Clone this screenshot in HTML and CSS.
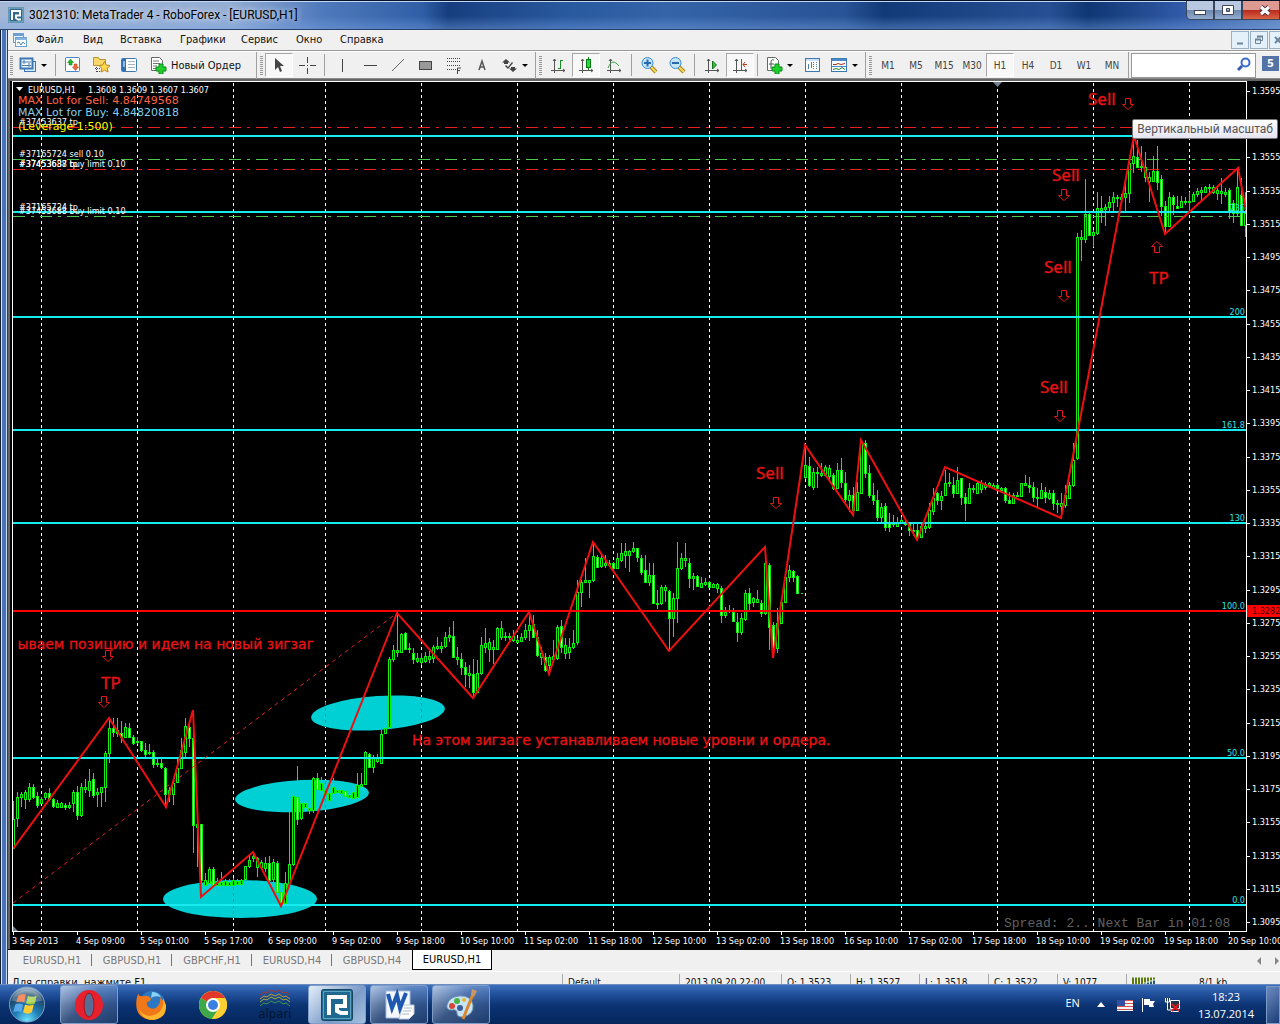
FILE: index.html
```html
<!DOCTYPE html>
<html lang="ru">
<head>
<meta charset="utf-8">
<meta name="viewport" content="width=device-width, initial-scale=1">
<title>3021310: MetaTrader 4 - RoboForex - [EURUSD,H1]</title>
<link rel="stylesheet" href="styles.css">
</head>
<body>
<div class="window">
  <header class="titlebar">
    <svg class="app-icon" viewBox="0 0 32 32"><rect width="32" height="32" rx="3" fill="#2c6a8e"/><path d="M2 2h28v28H2z" fill="none" stroke="#9cc6da" stroke-width="2"/><path d="M8 26V8h16v9h-8v5l4 3h6" fill="none" stroke="#fff" stroke-width="4"/></svg>
    <h1 class="title">3021310: MetaTrader 4 - RoboForex - [EURUSD,H1]</h1>
    <div class="window-controls">
      <button class="wc" aria-label="Свернуть"><svg viewBox="0 0 26 18"><rect x="7.500" y="9.500" width="11" height="4" fill="#fff" stroke="#445"/></svg></button>
      <button class="wc" aria-label="Развернуть"><svg viewBox="0 0 26 18"><path d="M7.500 4.500h11v9h-11zM11.500 7.500h3v3h-3z" fill="#fff" fill-rule="evenodd" stroke="#445"/></svg></button>
      <button class="wc wc-close" aria-label="Закрыть"><svg viewBox="0 0 36 18"><path d="M18 6l8 7M26 6l-8 7" stroke="#534" stroke-width="5"/><path d="M18 6l8 7M26 6l-8 7" stroke="#fff" stroke-width="3"/></svg></button>
    </div>
  </header>

  <div class="client">
    <nav class="menubar">
      <svg class="menu-icon" viewBox="0 0 16 16"><rect x="1.500" y="1.500" width="10" height="9" fill="#eaf4ff" stroke="#6c9fd4"/><path d="M1 3h11" stroke="#6c9fd4" stroke-width="2"/><rect x="3.500" y="5.500" width="11" height="9" fill="#fff" stroke="#6c9fd4"/><path d="M4 7h11" stroke="#8ab4e0" stroke-width="2"/><path d="M5 11l2-1 2 3 2-3 2 2" fill="none" stroke="#4a86c4"/></svg>
      <button class="menu-item m1">Файл</button>
      <button class="menu-item m2">Вид</button>
      <button class="menu-item m3">Вставка</button>
      <button class="menu-item m4">Графики</button>
      <button class="menu-item m5">Сервис</button>
      <button class="menu-item m6">Окно</button>
      <button class="menu-item m7">Справка</button>
      <div class="mdi-controls">
        <button class="mdi" aria-label="Свернуть график"><svg viewBox="0 0 16 16"><path d="M5 11.500h6" stroke="#6d8499" stroke-width="2"/></svg></button>
        <button class="mdi" aria-label="Восстановить график"><svg viewBox="0 0 16 16"><path d="M6.500 6V4.500h5v4H10M4.500 7.500h5v4h-5z" fill="none" stroke="#6d8499"/><path d="M6 4.500h6M4 7.500h6" stroke="#6d8499" stroke-width="2"/></svg></button>
        <button class="mdi" aria-label="Закрыть график"><svg viewBox="0 0 16 16"><path d="M5 5l6 6M11 5l-6 6" stroke="#6d8499" stroke-width="2"/></svg></button>
      </div>
    </nav>

    <div class="toolbar" role="toolbar">
      <span class="grip"></span>
      <button class="tool drop" aria-label="Новый график"><svg viewBox="0 0 18 18"><rect x="5.500" y="5.500" width="11" height="10" fill="#d8ecfa" stroke="#3c78b4"/><rect x="1.500" y="2.500" width="12" height="10" fill="#eef7ff" stroke="#3c78b4" stroke-width="2"/><path d="M3 6h9M3 9.500h9M5 4v4M10 7v4" stroke="#557fa8"/></svg></button>
      <span class="sep"></span>
      <button class="tool" aria-label="Обзор рынка"><svg viewBox="0 0 18 18"><rect x="1.500" y="1.500" width="14" height="14" rx="1" fill="#fff" stroke="#4a86c4"/><path d="M6.500 3l3 3.500H8V9H5V6.500H3.500z" fill="#20b828" stroke="#0b7d14" stroke-width=".5"/><path d="M11.500 14.500l-3-3.500H10V8h3v3h1.500z" fill="#f2683c" stroke="#b03a14" stroke-width=".5"/></svg></button>
      <button class="tool" aria-label="Навигатор"><svg viewBox="0 0 18 18"><path d="M1.500 9.500v-8h5l1 2h6v6z" fill="#f8d868" stroke="#b8922c"/><path d="M3 12.500h5M4.500 11v5M5 15.500h3" stroke="#444" stroke-dasharray="1 1"/><path d="M12.500 5.500l1.800 3.500 3.700.6-2.700 2.600.7 3.800-3.500-1.800L9 16l.7-3.800L7 9.600l3.700-.6z" fill="#ffd84a" stroke="#b8862c"/></svg></button>
      <button class="tool" aria-label="Терминал"><svg viewBox="0 0 18 18"><rect x="1.500" y="2.500" width="15" height="13" rx="1" fill="#fff" stroke="#3c78b4"/><path d="M2 3h4v12H2z" fill="#2d6fb8"/><path d="M3 6h2M3 8h2M3 10h2" stroke="#fff"/><path d="M8 5.500h7M8 8.500h7M8 11.500h7" stroke="#a8b4c0"/></svg></button>
      <button class="tool wide"><svg viewBox="0 0 18 18"><path d="M2.500 1.500h8l3 3v10h-11z" fill="#fff" stroke="#666"/><path d="M4 5h6M4 7.500h7M4 10h4M4 12.500h4" stroke="#777"/><path d="M10 8h4v3h3v4h-3v3h-4v-3H7v-4h3z" fill="#1fd02c" stroke="#0b8a16"/></svg>Новый Ордер</button>
      <span class="sep end"></span><span class="grip"></span>
      <button class="tool pressed" aria-label="Курсор"><svg viewBox="0 0 18 18"><path d="M5 2v12l3-3 2 5 2-1-2-5h4z" fill="#444"/></svg></button>
      <button class="tool" aria-label="Перекрестие"><svg viewBox="0 0 18 18"><path d="M9.500 1v6M9.500 12v6M1 9.500h6M12 9.500h6M9 9.500h1" stroke="#444"/></svg></button>
      <span class="sep"></span>
      <button class="tool" aria-label="Вертикальная линия"><svg viewBox="0 0 18 18"><path d="M9.500 3v13" stroke="#444"/></svg></button>
      <button class="tool" aria-label="Горизонтальная линия"><svg viewBox="0 0 18 18"><path d="M3 9.500h13" stroke="#444"/></svg></button>
      <button class="tool" aria-label="Трендовая линия"><svg viewBox="0 0 18 18"><path d="M3 15L15 3" stroke="#666"/></svg></button>
      <button class="tool" aria-label="Прямоугольник"><svg viewBox="0 0 18 18"><rect x="2.500" y="5.500" width="12" height="8" fill="#999" stroke="#444"/></svg></button>
      <button class="tool" aria-label="Линии Фибоначчи"><svg viewBox="0 0 18 18"><path d="M2 2.500h14M2 5.500h14M2 9.500h14M2 13.500h9" stroke="#444" stroke-dasharray="1 1"/><path d="M12.500 18v-6H16M12.500 14.500H15" fill="none" stroke="#444"/></svg></button>
      <button class="tool" aria-label="Текст"><svg viewBox="0 0 18 18"><path d="M6 14L9 5l3 9M7 11h4" fill="none" stroke="#555" stroke-width="1.500"/></svg></button>
      <button class="tool drop" aria-label="Стрелки"><svg viewBox="0 0 18 18"><path d="M2 6.500L6 3l4 3.500H8V8H4V6.500zM9 12.500h2V11h4v1.500h2L13 16zM5 10l1-1 2 2 4-5 1 1-5 6z" fill="#444"/></svg></button>
      <span class="sep end"></span><span class="grip"></span>
      <button class="tool" aria-label="Бары"><svg viewBox="0 0 18 18"><path d="M5.500 3v14M2 14.500h14M4 5l1.500-2L7 5M14 13l2 1.500L14 16" fill="none" stroke="#555"/><path d="M11.500 4v9M9 12.500h2M12 4.500h2" stroke="#169022"/></svg></button>
      <button class="tool pressed" aria-label="Свечи"><svg viewBox="0 0 18 18"><path d="M5.500 3v14M2 14.500h14M4 5l1.500-2L7 5M14 13l2 1.500L14 16" fill="none" stroke="#555"/><path d="M11.500 1v13" stroke="#087c14"/><rect x="9.500" y="3.500" width="4" height="8" fill="#24d838" stroke="#087c14"/></svg></button>
      <button class="tool" aria-label="Линия"><svg viewBox="0 0 18 18"><path d="M5.500 3v14M2 14.500h14M4 5l1.500-2L7 5M14 13l2 1.500L14 16" fill="none" stroke="#555"/><path d="M3 12c3-7 6-8 11-2" fill="none" stroke="#35a040"/></svg></button>
      <span class="sep"></span>
      <button class="tool" aria-label="Увеличить"><svg viewBox="0 0 18 18"><path d="M11 11l5 5" stroke="#a8821c" stroke-width="4"/><path d="M11 11l5 5" stroke="#f6dc5c" stroke-width="2"/><circle cx="7.500" cy="7" r="5.500" fill="#c4e4fa" stroke="#3a8ad0"/><path d="M4 7h7M7.500 3.500v7" stroke="#2868b0" stroke-width="2"/></svg></button>
      <button class="tool" aria-label="Уменьшить"><svg viewBox="0 0 18 18"><path d="M11 11l5 5" stroke="#a8821c" stroke-width="4"/><path d="M11 11l5 5" stroke="#f6dc5c" stroke-width="2"/><circle cx="7.500" cy="7" r="5.500" fill="#c4e4fa" stroke="#3a8ad0"/><path d="M4 7h7" stroke="#2868b0" stroke-width="2"/></svg></button>
      <span class="sep"></span>
      <button class="tool" aria-label="Автопрокрутка"><svg viewBox="0 0 18 18"><path d="M5.500 3v14M2 14.500h14M4 5l1.500-2L7 5M14 13l2 1.500L14 16" fill="none" stroke="#555"/><path d="M9.500 5l4 4-4 4z" fill="#35c040" stroke="#107818"/></svg></button>
      <button class="tool pressed" aria-label="Сдвиг графика"><svg viewBox="0 0 18 18"><path d="M5.500 3v14M2 14.500h14M4 5l1.500-2L7 5M14 13l2 1.500L14 16" fill="none" stroke="#555"/><path d="M10.500 3v11" stroke="#2868b0"/><path d="M16 8.500h-4M14 6l-2 2.500 2 2.500" fill="none" stroke="#c03a14"/></svg></button>
      <span class="sep"></span>
      <button class="tool drop" aria-label="Индикаторы"><svg viewBox="0 0 18 18"><path d="M2.500 1.500h8l3 3v10h-11z" fill="#fff" stroke="#666"/><path d="M9 4c-3-1-3 1-3 4v5M4 8h5" fill="none" stroke="#555"/><path d="M10 8h4v3h3v4h-3v3h-4v-3H7v-4h3z" fill="#1fd02c" stroke="#0b8a16"/></svg></button>
      <button class="tool" aria-label="Периоды"><svg viewBox="0 0 18 18"><rect x="2.500" y="2.500" width="14" height="13" fill="#fff" stroke="#3c78b4"/><path d="M3 4h13" stroke="#9cc8ec"/><path d="M5.500 8v5M8.500 6v6" stroke="#557fa8"/><path d="M10.500 6v7M13.500 6v7" stroke="#557fa8" stroke-dasharray="1 1"/></svg></button>
      <button class="tool drop" aria-label="Шаблоны"><svg viewBox="0 0 18 18"><rect x="1.500" y="2.500" width="15" height="13" fill="#fff" stroke="#3c78b4"/><path d="M2 4h14" stroke="#4a8ac8" stroke-width="2"/><path d="M2 10.500h14" stroke="#4a8ac8"/><path d="M3 8.500h3l2-1 3 1 4-1" fill="none" stroke="#a03020"/><path d="M3 13.500l3-1 3 1 3-2 3 2" fill="none" stroke="#208030"/></svg></button>
      <span class="sep end"></span><span class="grip"></span>
      <button class="tool tf">M1</button><button class="tool tf">M5</button><button class="tool tf">M15</button><button class="tool tf">M30</button><button class="tool tf pressed">H1</button><button class="tool tf">H4</button><button class="tool tf">D1</button><button class="tool tf">W1</button><button class="tool tf">MN</button>
      <span class="sep end"></span>
      <label class="search"><input type="text" aria-label="Поиск"><svg viewBox="0 0 16 16"><circle cx="9.500" cy="5.500" r="4" fill="#fff" stroke="#3a6ccc" stroke-width="2"/><path d="M6 9l-4 4" stroke="#3a5cac" stroke-width="3"/></svg></label>
      <button class="chat">5</button>
    </div>

    <main class="chart-pane">
      <svg class="chart" viewBox="8 79 1272 870" preserveAspectRatio="xMinYMin slice" role="img" aria-label="График EURUSD,H1">
        <defs>
          <clipPath id="plot"><rect x="13" y="82" width="1234" height="849"/></clipPath>
          <path id="down" d="M-2.500-5.500h5v6h3L0 5.500-5.500.5h3z"/>
        </defs>
        <rect x="10" y="81" width="1270" height="868"/>
        <g clip-path="url(#plot)">
          <g id="grid" class="grid"></g>
          <g class="ellipses">
            <ellipse cx="240" cy="899" rx="77" ry="19"/>
            <ellipse cx="302" cy="796" rx="67" ry="16" transform="rotate(-3 302 796)"/>
            <ellipse cx="378" cy="713" rx="67" ry="17" transform="rotate(-4 378 713)"/>
          </g>
          <path class="grid-over" d="M233.500 881v37M325.500 781v30M325.500 702v25M421.500 697v25"/>
          <path id="candles-up" class="candle up"/>
          <path id="candles-down" class="candle down"/>
          <path class="order stop" d="M13 127.500h1234M13 169.500h1234"/>
          <path class="order limit" d="M13 159.500h1234M13 216.500h1234"/>
          <path class="level" d="M13 136h1234M13 212h1234M13 317h1234M13 430h1234M13 523h1234M13 758h1234M13 905h1234"/>
          <path class="fib-base" d="M13 903L397 613"/>
          <path class="zigzag" d="M13 849L109 718 166 807 193 710 201 897 253 852 281 906 397 613 473 698 529 612 549 674 593 542 669 651 765 547 773 658 805 445 853 515 861 440 917 540 945 467 1061 518 1078 430 1134 136 1165 234 1238 168 1246 210"/>
          <path class="price-line" d="M13 611h1234"/>
          <g class="note">
            <text x="1088" y="105">Sell</text><text x="1052" y="181">Sell</text><text x="1044" y="273">Sell</text><text x="1040" y="393">Sell</text><text x="756" y="479">Sell</text>
            <text x="1149" y="284">TP</text><text x="101" y="689">TP</text>
            <text class="phrase" x="314" y="649" text-anchor="end">ываем позицию и идем на новый зигзаг</text>
            <text class="phrase" x="412" y="745">На этом зигзаге устанавливаем новые уровни и ордера.</text>
          </g>
          <g class="arrows">
            <use href="#down" x="1128" y="104"/><use href="#down" x="1064" y="195"/><use href="#down" x="1064" y="296"/><use href="#down" x="1060" y="416"/><use href="#down" x="776" y="503"/><use href="#down" x="108" y="656"/><use href="#down" x="104" y="702"/>
            <use href="#down" transform="translate(1157 247) rotate(180)"/>
          </g>
          <g class="fib-label" text-anchor="end">
            <text x="1245" y="211">236</text><text x="1245" y="315">200</text><text x="1245" y="428">161.8</text><text x="1245" y="521">130</text><text x="1245" y="609">100.0</text><text x="1245" y="756">50.0</text><text x="1245" y="903">0.0</text>
          </g>
          <g class="order-label">
            <text x="19" y="125">#37453637 tp</text><text x="19" y="157">#37165724 sell 0.10</text><text x="19" y="167">#37453637 tp</text><text x="19" y="167">#37453688 buy limit 0.10</text><text x="19" y="210">#37165724 tp</text><text x="19" y="214">#37453688 buy limit 0.10</text>
          </g>
          <path d="M16 87h7l-3.500 4z" fill="#fff"/>
          <text x="28" y="93">EURUSD,H1</text><text x="88" y="93">1.3608 1.3609 1.3607 1.3607</text>
          <text class="lot lot-sell" x="18" y="104">MAX Lot for Sell: 4.84749568</text><text class="lot lot-buy" x="18" y="116">MAX Lot for Buy: 4.84820818</text><text class="lot leverage" x="18" y="130">(Leverage 1:500)</text>
          <text class="spread" x="1004" y="927">Spread: 2.. Next Bar in 01:08</text>
          <path d="M993 82h9l-4.500 5zM13 931v-5l5 5z" fill="#708090"/>
        </g>
        <path class="frame" d="M12.500 931.500v-850h1234v850z"/>
        <g id="price-axis" class="axis"></g>
        <g id="time-axis" class="axis"></g>
        <rect x="1247" y="605" width="33" height="12" fill="#f00"/><text class="current" x="1252" y="614">1.3282</text>
      </svg>
      <div class="tooltip" role="tooltip">Вертикальный масштаб</div>
    </main>

    <nav class="tabs">
      <button class="tab">EURUSD,H1</button><button class="tab">GBPUSD,H1</button><button class="tab">GBPCHF,H1</button><button class="tab">EURUSD,H4</button><button class="tab">GBPUSD,H4</button><button class="tab active">EURUSD,H1</button>
      <span class="tab-scroll"><svg viewBox="0 0 24 10"><path d="M5 1v8L1 5zM19 1v8l4-4z" fill="#888"/></svg></span>
    </nav>

    <footer class="statusbar">
      <span class="help">Для справки, нажмите F1</span>
      <span class="cell c-profile">Default</span>
      <span class="cell c-date">2013.09.20 22:00</span>
      <span class="cell">O: 1.3523</span>
      <span class="cell">H: 1.3527</span>
      <span class="cell">L: 1.3518</span>
      <span class="cell">C: 1.3522</span>
      <span class="cell">V: 1077</span>
      <span class="cell c-link"><svg viewBox="0 0 24 12"><path d="M1 0v12M4 0v12M7 0v12M10 0v12M13 0v5M16 0v4M19 0v3M22 0v2" stroke="#5c7a10" stroke-width="2"/><path d="M13 6v6M16 5v7M19 4v8M22 3v9" stroke="#245a6c" stroke-width="2"/></svg>8/1 kb</span>
    </footer>
  </div>
</div>

<footer class="taskbar">
  <button class="start" aria-label="Пуск"><svg viewBox="0 0 40 40"><defs><radialGradient id="orb" cx=".5" cy=".95" r=".9"><stop offset="0" stop-color="#6fe4ff"/><stop offset=".4" stop-color="#1f7fb8"/><stop offset=".8" stop-color="#1c4468"/><stop offset="1" stop-color="#9ab4c8"/></radialGradient></defs><circle cx="20" cy="20" r="18" fill="url(#orb)" stroke="#7a9cc0"/><path d="M11 11q4-3 8-1l-2 8q-4-2-8 0z" fill="#f2692c"/><path d="M21 11q4 2 9 0l-2 8q-5 2-9 0z" fill="#9ccc3a"/><path d="M8 20q4-2 8 0l-2 8q-4-2-8 0z" fill="#5aa8ec"/><path d="M18 20q4 2 9 0l-2 8q-4 3-9 0z" fill="#fccc34"/><path d="M4 16a17 17 0 0 1 32 0q-16 5-32 0" fill="#fff" opacity=".25"/></svg></button>
  <button class="task open" aria-label="Opera"><svg viewBox="0 0 32 32"><ellipse cx="16" cy="16" rx="14" ry="15" fill="#e8202c"/><ellipse cx="16" cy="16" rx="5" ry="12" fill="#5a6c94" stroke="#a81018"/></svg></button>
  <button class="task" aria-label="Firefox"><svg viewBox="0 0 32 32"><circle cx="17" cy="15" r="13" fill="#2a78c4"/><path d="M17 3q6 0 9 5-6-2-10 1z" fill="#8cd0f4"/><path d="M3 5q2 3 6 2 5-1 7 3-1 3-4 3-1 4 3 6 5 2 8-2 3-4 2-9 6 6 5 13-2 9-13 10Q5 30 2 21 0 13 3 5" fill="#f07818"/><path d="M28 9q2 16-13 18-7 0-11-7 3 11 14 11 14-2 13-15z" fill="#fcb42c"/></svg></button>
  <button class="task" aria-label="Chrome"><svg viewBox="0 0 32 32"><circle cx="16" cy="16" r="14" fill="#fcd030"/><path d="M16 16L3.900 9A14 14 0 0 1 28.100 9z" fill="#e0392c"/><path d="M16 16L3.900 9a14 14 0 0 0 11 21L22 19z" fill="#3ca848"/><path d="M16 9h12a14 14 0 0 1-13 21l7-11z" fill="#fcd030"/><circle cx="16" cy="16" r="7" fill="#fff"/><circle cx="16" cy="16" r="5" fill="#3a80e0"/></svg></button>
  <button class="task alpari"><svg viewBox="0 0 32 18"><g fill="none"><path d="M1 6l4-3 3 1 4-3 4 2 4-2 4 3 3-1 4 3" stroke="#a8382c"/><path d="M1 10l4-3 3 1 4-3 4 2 4-2 4 3 3-1 4 3" stroke="#c89c30"/><path d="M1 13l4-3 3 1 4-3 4 2 4-2 4 3 3-1 4 3" stroke="#a8b030"/><path d="M1 17l4-3 3 1 4-3 4 2 4-2 4 3 3-1 4 3" stroke="#3c9448"/></g></svg><span>alpari</span></button>
  <button class="task open current-task" aria-label="MetaTrader"><svg viewBox="0 0 32 32"><rect x=".5" y=".5" width="31" height="31" rx="2" fill="#1f6890" stroke="#164660"/><path d="M2.500 2.500h27v27h-27z" fill="none" stroke="#5ea0c0"/><path d="M8 26V8h16v9h-8v5l4 2h7" fill="none" stroke="#fff" stroke-width="4"/></svg></button>
  <button class="task open" aria-label="Word"><svg viewBox="0 0 32 32"><path d="M3 2h24v27H3z" fill="#f4f8fe" stroke="#a8bcdc"/><path d="M20 16h11v9l-5 5H16z" fill="#fff" stroke="#bcc8dc"/><path d="M21 19h8M20 22h8M19 25h7" stroke="#a8b8d0"/><path d="M5 5l4 14 5-13 3 13L23 4" fill="none" stroke="#1f58b0" stroke-width="4"/></svg></button>
  <button class="task open" aria-label="Paint"><svg viewBox="0 0 32 32"><path d="M14 7q12-1 14 9 1 10-11 12-5 0-5-4t-5-3q-6 0-5-5 2-8 12-9" fill="#c8e4f4" stroke="#7098b4"/><circle cx="7" cy="17" r="3" fill="#d84438"/><circle cx="12" cy="12" r="3" fill="#48b448"/><circle cx="19" cy="11" r="2" fill="#e8b428"/><circle cx="15" cy="19" r="3" fill="#3c5c9c"/><path d="M28 5L18 30" stroke="#d88830" stroke-width="3"/><path d="M26 6l1-6 5 2-3 6z" fill="#c89868"/></svg></button>
  <div class="tray">
    <span class="lang">EN</span>
    <svg class="t-up" viewBox="0 0 8 5"><path d="M0 5l4-5 4 5z" fill="#fff"/></svg>
    <svg class="t-icon" viewBox="0 0 16 16"><rect y="3" width="16" height="11" fill="#f4f4f4"/><path d="M0 3.500h16M0 6.500h16M0 9.500h16M0 12.500h16" stroke="#d85450"/><rect y="3" width="8" height="6" fill="#3450a0"/></svg>
    <svg class="t-icon" viewBox="0 0 16 16"><path d="M1.500 1v14" stroke="#fff"/><path d="M3 2h6v2h5l-2 3 1 3H8V8H3z" fill="#fff"/></svg>
    <svg class="t-icon" viewBox="0 0 16 16"><path d="M5.500 3.500h9v8h-9zM2.500 1v4M.500 1v4h4V1M2.500 5v8H7M6 14.500h8" fill="#234" stroke="#fff"/><path d="M7 7l7 7M14 7l-7 7" stroke="#e01818" stroke-width="2"/></svg>
    <time class="clock">18:23<br>13.07.2014</time>
    <button class="show-desktop" aria-label="Показать рабочий стол"></button>
  </div>
</footer>
<script src="chart.js"></script>
</body>
</html>
```
FILE: styles.css
```css
* { box-sizing: border-box; }
body {
  margin: 0;
  height: 100vh;
  display: flex;
  flex-direction: column;
  overflow: hidden;
  font-family: "DejaVu Sans Condensed", "DejaVu Sans", sans-serif;
  font-stretch: condensed;
  font-size: 11px;
  color: #111;
}
button { border: 0; padding: 0; background: none; font: inherit; color: inherit; }
svg { display: block; flex: none; }

.window {
  flex: 1;
  min-height: 0;
  display: flex;
  flex-direction: column;
  background: linear-gradient(90deg, #101c30 0 1px, #dce8f8 1px 2px, #4a72b8 2px 6px, #c8dcf4 6px 7px, #303c50 7px);
}
.titlebar {
  height: 30px;
  flex: none;
  display: flex;
  align-items: center;
  padding-left: 8px;
  gap: 5px;
  border-top: 1px solid #06122a;
  border-bottom: 1px solid #28406c;
  background:
    linear-gradient(180deg, #c4d6f0 0 1px, rgba(255, 255, 255, .05) 1px 15px, rgba(130, 170, 230, .45) 100%),
    linear-gradient(90deg, #9fb4d4 0, #8ea9d2 18%, #4673b8 25%, #2556a2 33%, #0a3478 35%, #1d4f98 44%, #2a5ca4 52%, #1d4a90 66%, #043070 69%, #1b478e 82%, #022c6c 85%, #2450a0 92%, #5880bc 100%);
}
.app-icon { width: 16px; height: 16px; }
.title {
  margin: 0;
  font: 12px Roboto, sans-serif;
  color: #000;
  text-shadow: 0 0 6px #fff;
}
.window-controls { display: flex; align-self: flex-start; margin-left: auto; }
.wc { width: 28px; height: 19px; border: 1px solid #38465c; border-top: 0; background: linear-gradient(#b8c8e0 0 9px, #6b86ae 9px, #93add0); }
.wc svg { height: 18px; }
.wc:first-child { border-radius: 0 0 0 5px; }
.wc-close { width: 38px; background: linear-gradient(#dc9a90 0 9px, #b8281c 9px, #dc6444); }

.client { flex: 1; min-height: 0; margin-left: 8px; display: flex; flex-direction: column; background: #f0f0f0; }
.menubar { height: 21px; flex: none; display: flex; align-items: center; padding-left: 4px; border-bottom: 1px solid #999; }
.menu-icon { width: 16px; height: 16px; margin-right: 4px; }
.menu-item { flex: none; padding-left: 4px; text-align: left; white-space: nowrap; line-height: 20px; }
.m1 { width: 47px; }
.m2 { width: 37px; }
.m3 { width: 60px; }
.m4 { width: 61px; }
.m5 { width: 55px; }
.m6 { width: 44px; }
.mdi-controls { margin-left: auto; display: flex; gap: 1px; overflow: hidden; width: 49px; }
.mdi { width: 18px; height: 18px; flex: none; border: 1px solid #9ab0c4; background: #e4f0fa; }
.mdi svg { width: 16px; }

.toolbar { height: 28px; flex: none; display: flex; align-items: center; border-top: 1px solid #fff; border-bottom: 1px solid #888; }
.grip { flex: none; width: 7px; height: 19px; background: repeating-linear-gradient(#999 0 1px, transparent 1px 2px) 2px 0 / 3px 100% no-repeat; }
.sep { flex: none; width: 7px; height: 22px; background: linear-gradient(#a0a0a0, #a0a0a0) 3px 0 / 1px 100% no-repeat; }
.sep.end { width: 4px; height: 27px; background-position: 2px 0; }
.tool { flex: none; width: 28px; height: 24px; display: flex; align-items: center; justify-content: center; white-space: nowrap; }
.tool svg { width: 18px; height: 18px; }
.tool.drop { width: 37px; justify-content: flex-start; padding-left: 4px; gap: 4px; }
.tool.drop::after { content: ""; border: 3px solid transparent; border-top-color: #000; border-bottom: 0; }
.tool.wide { width: 111px; justify-content: flex-start; padding-left: 6px; gap: 4px; }
.tool.pressed { border: 1px solid #a8a8a8; border-right-color: #fff; border-bottom-color: #fff; background: #f8f8f8; }
.tf { font-size: 10px; color: #444; }
.search { flex: 1; min-width: 60px; height: 25px; margin-left: 1px; display: flex; align-items: center; padding-right: 3px; background: #fff; border: 1px solid #999; }
.search input { flex: 1; min-width: 0; border: 0; outline: 0; background: none; }
.search svg { width: 16px; }
.chat { flex: none; width: 17px; height: 15px; margin: 0 1px 4px 6px; background: #5474a8; color: #fff; font-weight: bold; line-height: 15px; }

.chart-pane { flex: 1; min-height: 0; position: relative; background: #666; overflow: hidden; }
.chart { width: 100%; height: 100%; }
.chart text { font-size: 9px; fill: #fff; }
.grid { stroke: #fff; stroke-dasharray: 3 3; shape-rendering: crispEdges; }
.grid-over { stroke: #c05050; stroke-dasharray: 3 3; }
.ellipses { fill: #00d0d4; }
.candle { stroke: #0ef00e; shape-rendering: crispEdges; }
.up { fill: #000; }
.down { fill: #d8ffd8; }
.level { stroke: #16ecee; stroke-width: 2; }
.order { stroke-dasharray: 12 6 3 6; shape-rendering: crispEdges; }
.stop { stroke: #ea2020; }
.limit { stroke: #4cc84c; }
.fib-base { fill: none; stroke: #e02020; stroke-dasharray: 4 4; }
.zigzag { fill: none; stroke: #ee1010; stroke-width: 2; }
.price-line { stroke: #f00; stroke-width: 2; }
.chart .note text { fill: #e81414; font: 17px "Comic Sans MS", "Noto Sans", sans-serif; stroke: #e81414; stroke-width: .3px; }
.chart .note .phrase { font: 14px "Comic Sans MS", "DejaVu Sans", sans-serif; }
.arrows { fill: none; stroke: #e01818; }
.chart .fib-label text { fill: #30e0e4; }
.chart .lot { font: 11px "Comic Sans MS", "DejaVu Sans", sans-serif; }
.chart .lot-sell { fill: #ff6347; }
.chart .lot-buy { fill: #87ceeb; }
.chart .leverage { fill: #ff0; }
.chart .spread { font: 13px "Liberation Mono", monospace; fill: #606060; }
.frame { fill: none; stroke: #fff; shape-rendering: crispEdges; }
.axis path { stroke: #fff; }
.chart .current { fill: #400; }
.tooltip {
  position: absolute;
  top: 40px;
  right: 2px;
  height: 20px;
  padding: 0 4px;
  border: 1px solid #767676;
  border-radius: 2px;
  background: linear-gradient(#fff, #e4e5f0);
  color: #555;
  font: 12px/18px Roboto, sans-serif;
  white-space: nowrap;
}

.tabs { height: 23px; flex: none; display: flex; border-top: 1px solid #000; border-bottom: 1px solid #fff; padding: 0 0 2px 4px; }
.tab { flex: none; width: 80px; color: #777; position: relative; height: 20px; }
.tab:not(.active)::after { content: ""; position: absolute; right: 0; top: 4px; height: 12px; border-right: 1px solid #777; }
.tab:nth-child(5)::after { display: none; }
.tab.active { background: #fff; color: #000; border: 1px solid #000; border-top: 0; }
.tab-scroll { margin: 6px 0 0 auto; }
.tab-scroll svg { width: 24px; }

.statusbar { height: 12px; flex: none; display: flex; overflow: hidden; line-height: 22px; white-space: nowrap; font-size: 10px; }
.help { flex: 1; padding-left: 4px; font-size: 11px; }
.cell { width: 69px; flex: none; height: 16px; margin-top: 2px; padding-left: 5px; line-height: 18px; border-left: 1px solid #aaa; }
.c-profile { width: 117px; }
.c-date { width: 102px; }
.c-link { width: 154px; display: flex; gap: 43px; }
.c-link svg { width: 24px; margin-top: 3px; }

.taskbar {
  height: 40px;
  flex: none;
  display: flex;
  align-items: center;
  padding-left: 7px;
  border-top: 1px solid #6a8cc0;
  background: linear-gradient(#3c70bc 0, #2454a0 8px, #0c3474 20px, #04265c 100%);
  color: #fff;
}
.start { width: 40px; height: 39px; margin-right: 13px; }
.start svg { width: 40px; height: 39px; }
.task { width: 58px; height: 39px; margin-right: 4px; display: flex; align-items: center; justify-content: center; flex: none; }
.task svg { width: 32px; height: 32px; }
.task.open { border: 1px solid #7e9cc8; border-radius: 3px; background: linear-gradient(135deg, rgba(255, 255, 255, .6) 0, rgba(255, 255, 255, .2) 45%, rgba(255, 255, 255, .1)); }
.task.current-task { background: linear-gradient(135deg, #e4eefa, #7c9cc8 60%, #a4c0e0); }
.task.alpari { flex-direction: column; color: #04142c; font-size: 13px; line-height: 14px; }
.task.alpari svg { height: 18px; }
.tray { margin-left: auto; display: flex; align-items: center; font: 11px/17px "Open Sans", sans-serif; height: 39px; }
.lang { margin-right: 17px; margin-bottom: 4px; }
.t-up { width: 8px; margin-right: 12px; }
.t-icon { width: 16px; margin-right: 8px; }
.clock { text-align: center; margin: 0 12px 0 9px; }
.show-desktop { width: 14px; height: 38px; border: 1px solid #7c98c4; background: linear-gradient(135deg, #6c8cc0, #1c3c78); }
```
FILE: chart.js
```js
// One bar per entry: high, body top, body bottom, low; "d" marks a falling bar.
const BAR_STEP = 4;
const FIRST_BAR = 13;
const bars = `
801 819 848 848|792 797 818 827|792 794 797 807|790 792 799 809|783 787 799 802|784 787 797 799 d|792 796 805 808 d|797 799 803 804|792 793 797 800|788 793 799 801 d
798 799 806 808 d|800 803 807 808|802 803 807 807|803 805 807 810 d|802 805 807 809|790 792 803 812|786 792 815 820 d|783 787 815 817|779 787 789 793|769 781 790 797
773 779 795 798 d|788 792 794 807|787 787 792 807|751 753 787 802|718 728 753 763|718 728 732 737 d|718 730 733 737 d|721 733 737 743 d|723 727 737 738|723 728 737 738 d
735 737 743 745 d|737 741 742 744 d|741 741 750 752 d|743 750 754 757 d|744 752 753 755 d|750 752 764 768 d|758 763 764 767 d|758 763 767 769 d|767 768 794 808 d|787 790 794 802
778 783 794 805|757 768 782 783|738 750 768 769|718 726 752 757|723 727 738 747 d|710 738 825 853 d|823 824 827 867 d|824 824 880 883 d|873 880 885 887|867 869 883 887
867 869 885 887 d|878 882 885 887|872 882 885 888|879 881 885 887|879 882 885 887|878 880 885 887|879 881 884 888|879 880 884 887|866 866 879 880|855 860 866 868
852 856 858 862|857 858 867 877|860 862 867 870|857 863 868 872|856 863 880 883 d|859 862 879 882|861 863 892 895 d|883 892 904 906 d|872 883 903 904|782 864 883 884
782 796 864 866|766 797 819 825 d|790 803 818 820|796 803 807 810|803 808 810 814|777 778 810 813|773 778 789 790 d|777 783 790 793|787 790 794 797|783 793 800 803
778 787 793 803|787 790 792 797|786 790 793 797|788 791 796 798 d|790 795 797 802|787 792 798 800|773 785 797 802|773 784 786 797|751 752 784 785|753 754 767 768 d
755 757 767 773|754 757 761 763|730 734 763 764|713 728 733 734|657 659 727 728|645 650 659 662|612 650 652 657|633 634 652 653|632 633 649 650 d|643 648 649 653
648 653 659 664 d|653 658 661 663|653 658 662 665|652 656 661 663|651 656 659 663|645 647 658 663|637 646 648 650|642 646 648 653|632 637 646 648|627 635 637 642
621 636 657 658 d|647 657 659 665|653 659 667 675 d|662 667 674 687 d|665 673 675 688|659 674 692 697 d|660 673 692 693|637 645 673 675|628 643 647 653|638 642 649 662
640 647 649 664|627 628 649 650|621 628 637 640|632 636 637 641|633 636 637 640|630 636 640 642|638 640 642 642|633 637 641 642|624 630 637 640|612 625 630 641
615 624 637 638 d|630 637 655 657 d|647 653 657 665|653 657 670 672 d|655 657 665 673|640 656 659 660|625 627 658 660|620 626 647 653 d|638 645 653 659|638 647 652 659
630 643 647 649|580 592 642 645|580 582 592 607|558 580 582 583|580 580 582 598|542 556 580 582|555 557 567 568 d|555 558 566 568|555 563 565 568|560 563 565 567
562 563 568 570 d|553 558 568 569|543 553 560 562|543 551 555 568|550 551 555 572|542 548 551 553|548 548 557 562 d|555 558 572 575 d|555 570 582 583 d|563 575 582 586
563 575 603 604 d|590 603 604 609|585 587 603 605|585 587 590 602|590 591 618 650 d|593 598 618 637|542 568 598 623|553 558 568 570|543 558 560 567|558 563 578 588 d
573 576 578 590|575 576 586 587 d|577 583 587 587|578 582 584 586|581 582 587 587 d|583 584 587 588|583 584 588 593|586 588 615 623 d|607 612 615 618|605 610 611 613
608 612 621 622 d|613 622 632 642 d|613 618 632 635|590 593 619 621|588 593 603 610 d|597 598 602 607|590 599 602 603|600 603 613 617 d|547 563 613 615|563 565 627 650 d
622 625 648 657 d|608 623 648 653|598 602 623 624|573 577 602 603|565 570 577 582|570 571 577 582 d|575 576 593 594 d|593 593 593 593|448 465 477 479|457 466 485 487 d
468 472 487 490|467 472 473 488|463 473 475 477|465 467 475 476|465 468 476 482|473 475 488 490 d|463 470 488 489|458 470 482 488 d|472 483 499 502 d|490 495 500 512
487 495 510 513 d|482 492 510 511|440 442 493 494|440 443 473 478 d|465 473 495 498 d|483 495 500 505 d|490 500 517 521 d|503 507 517 522|503 506 527 531 d|513 522 527 532 d
515 522 524 527|517 522 526 527|517 520 523 524|520 522 524 526|522 524 530 536 d|523 530 531 536|522 530 537 540 d|522 526 537 538|523 526 528 533|503 510 527 529
488 498 511 515|492 493 500 505 d|491 496 500 510|470 483 495 496|473 482 483 487|477 485 493 498 d|467 480 493 494|478 478 497 505 d|493 497 503 521 d|483 488 503 504
485 488 489 493|481 483 493 494|480 483 489 493|482 484 487 490|482 483 485 488|483 485 488 489|483 485 488 489 d|487 488 490 493|487 488 500 503 d|492 500 503 504 d
493 495 503 503|492 495 496 497|483 483 496 496|475 483 485 486|477 485 487 493 d|482 487 497 502 d|488 497 498 507|483 490 498 499|487 492 497 503 d|490 493 498 500
490 493 503 510 d|500 503 504 513|493 503 506 517|485 495 505 508|482 485 498 499|443 460 485 487|233 237 458 460|230 237 239 261|179 214 239 243|213 214 235 236 d
230 232 235 247|192 208 233 235|196 208 210 223|204 207 209 226|196 202 207 213|192 197 202 212|195 197 198 207|194 197 199 202|182 193 197 211|157 163 193 203
135 156 163 173|140 157 167 168 d|146 166 167 172|152 167 177 182|172 177 181 202|156 171 181 182|146 171 182 190 d|175 179 206 216 d|201 206 226 233 d|192 197 226 227
195 197 204 215 d|196 206 208 208 d|196 201 207 208|197 201 202 205|192 201 202 213|192 194 201 202|188 191 194 197|187 190 192 201|186 187 192 193|184 187 188 193
185 187 192 194|188 190 193 200|178 191 193 204|188 192 194 197|188 190 212 219 d|200 203 213 223 d|168 187 213 217|178 195 225 226 d|192 213 225 237`;

const outlines = { up: "", down: "" };
bars.trim().split(/[|\n]/).forEach((bar, index) => {
  const [high, top, bottom, low, falling] = bar.split(" ");
  const x = FIRST_BAR + index * BAR_STEP;
  outlines[falling ? "down" : "up"] +=
    `M${x + 0.5} ${high}V${top}M${x + 0.5} ${bottom}V${low}` +
    `M${x - 0.5} ${+top + 0.5}h2V${+bottom + 0.5}h-2z`;
});
document.getElementById("candles-up").setAttribute("d", outlines.up);
document.getElementById("candles-down").setAttribute("d", outlines.down);

const days = [41, 137, 233, 325, 421, 517, 613, 709, 805, 901, 997, 1093, 1189];
document.getElementById("grid").innerHTML =
  days.map(x => `<path d="M${x + 0.5} 83V931"/>`).join("");

// The second price mark lies under the tooltip and is left out.
let prices = "";
for (let i = 0; i <= 25; i++) {
  if (i === 1) continue;
  const y = Math.round(91 + i * 33.24);
  prices += `<path d="M1247 ${y + 0.5}h3"/>` +
    `<text x="1252" y="${y + 3}">${(1.3595 - i * 0.002).toFixed(4)}</text>`;
}
document.getElementById("price-axis").innerHTML = prices;

const times = ["3 Sep 2013", "4 Sep 09:00", "5 Sep 01:00", "5 Sep 17:00", "6 Sep 09:00",
  "9 Sep 02:00", "9 Sep 18:00", "10 Sep 10:00", "11 Sep 02:00", "11 Sep 18:00",
  "12 Sep 10:00", "13 Sep 02:00", "13 Sep 18:00", "16 Sep 10:00", "17 Sep 02:00",
  "17 Sep 18:00", "18 Sep 10:00", "19 Sep 02:00", "19 Sep 18:00", "20 Sep 10:00"];
document.getElementById("time-axis").innerHTML = times.map((label, i) =>
  `<path d="M${13.5 + i * 64} 932v3"/><text x="${12 + i * 64}" y="944">${label}</text>`).join("");
```
